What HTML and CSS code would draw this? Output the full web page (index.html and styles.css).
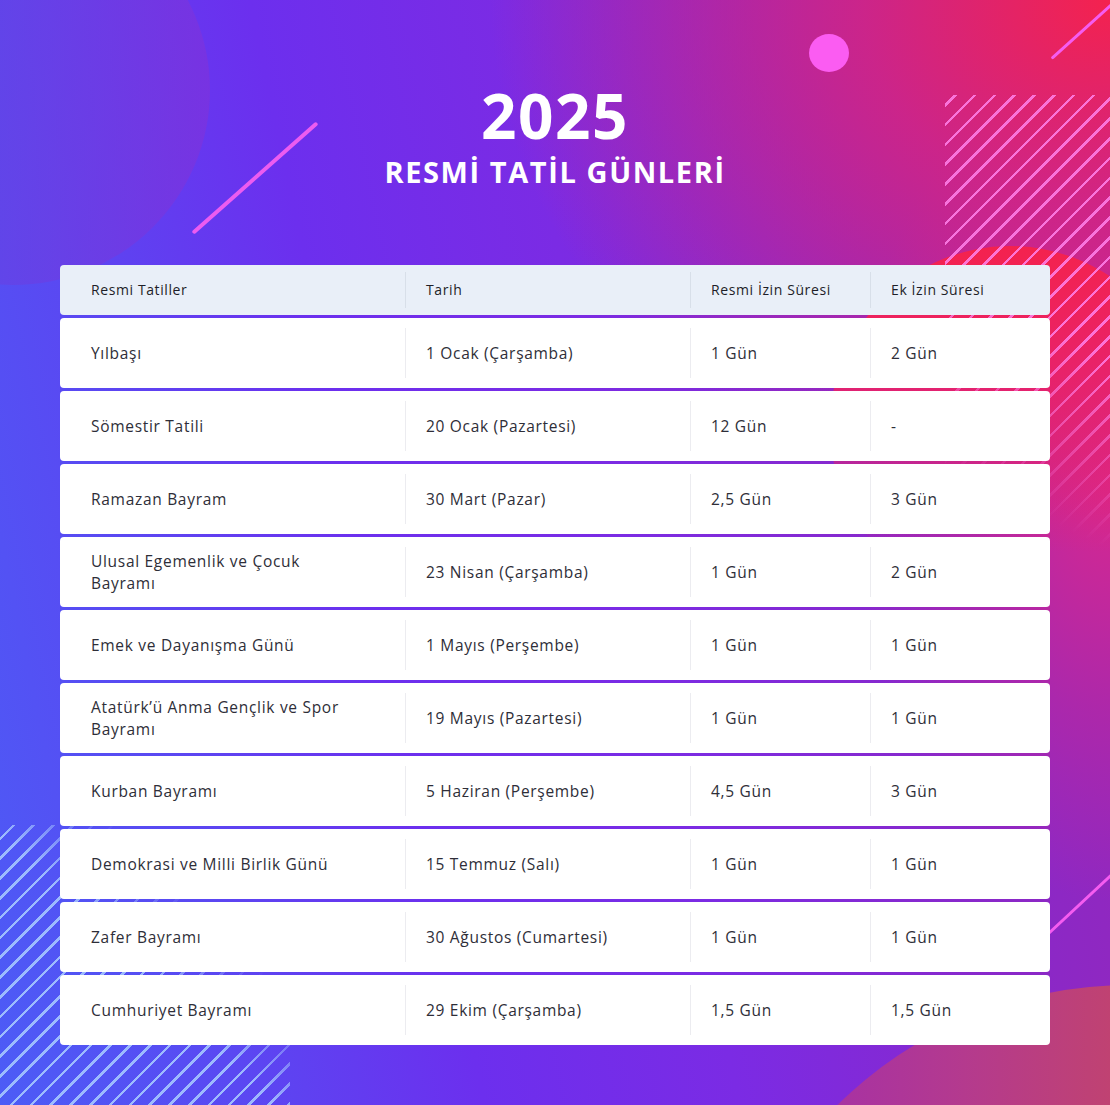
FILE: index.html
```html
<!DOCTYPE html>
<html lang="tr">
<head>
<meta charset="utf-8">
<title>2025 Resmi Tatil Günleri</title>
<link rel="stylesheet" href="styles.css">
</head>
<body>
<div class="page">
  <div class="deco blob-tl"></div>
  <div class="deco blob-red"></div>
  <div class="deco blob-br"></div>
  <div class="deco stripes-tr"></div>
  <div class="deco stripes-bl"></div>
  <div class="deco dot"></div>
  <div class="deco line-a"></div>
  <div class="deco line-b"></div>
  <div class="deco line-c"></div>

  <header class="title">
    <h1 class="year">2025</h1>
    <h2 class="subtitle">RESMİ TATİL GÜNLERİ</h2>
  </header>

  <div class="table">
    <div class="row head">
      <div class="cell c1">Resmi Tatiller</div>
      <div class="cell">Tarih</div>
      <div class="cell">Resmi İzin Süresi</div>
      <div class="cell">Ek İzin Süresi</div>
    </div>
    <div class="row">
      <div class="cell c1">Yılbaşı</div>
      <div class="cell">1 Ocak (Çarşamba)</div>
      <div class="cell">1 Gün</div>
      <div class="cell">2 Gün</div>
    </div>
    <div class="row">
      <div class="cell c1">Sömestir Tatili</div>
      <div class="cell">20 Ocak (Pazartesi)</div>
      <div class="cell">12 Gün</div>
      <div class="cell">-</div>
    </div>
    <div class="row">
      <div class="cell c1">Ramazan Bayram</div>
      <div class="cell">30 Mart (Pazar)</div>
      <div class="cell">2,5 Gün</div>
      <div class="cell">3 Gün</div>
    </div>
    <div class="row">
      <div class="cell c1">Ulusal Egemenlik ve Çocuk Bayramı</div>
      <div class="cell">23 Nisan (Çarşamba)</div>
      <div class="cell">1 Gün</div>
      <div class="cell">2 Gün</div>
    </div>
    <div class="row">
      <div class="cell c1">Emek ve Dayanışma Günü</div>
      <div class="cell">1 Mayıs (Perşembe)</div>
      <div class="cell">1 Gün</div>
      <div class="cell">1 Gün</div>
    </div>
    <div class="row">
      <div class="cell c1">Atatürk’ü Anma Gençlik ve Spor Bayramı</div>
      <div class="cell">19 Mayıs (Pazartesi)</div>
      <div class="cell">1 Gün</div>
      <div class="cell">1 Gün</div>
    </div>
    <div class="row">
      <div class="cell c1">Kurban Bayramı</div>
      <div class="cell">5 Haziran (Perşembe)</div>
      <div class="cell">4,5 Gün</div>
      <div class="cell">3 Gün</div>
    </div>
    <div class="row">
      <div class="cell c1">Demokrasi ve Milli Birlik Günü</div>
      <div class="cell">15 Temmuz (Salı)</div>
      <div class="cell">1 Gün</div>
      <div class="cell">1 Gün</div>
    </div>
    <div class="row">
      <div class="cell c1">Zafer Bayramı</div>
      <div class="cell">30 Ağustos (Cumartesi)</div>
      <div class="cell">1 Gün</div>
      <div class="cell">1 Gün</div>
    </div>
    <div class="row">
      <div class="cell c1">Cumhuriyet Bayramı</div>
      <div class="cell">29 Ekim (Çarşamba)</div>
      <div class="cell">1,5 Gün</div>
      <div class="cell">1,5 Gün</div>
    </div>
  </div>
</div>
</body>
</html>
```

FILE: styles.css
```css
* { box-sizing: border-box; }
html, body { margin: 0; padding: 0; }
body { font-family: "Open Sans", "DejaVu Sans", sans-serif; }

.page {
  position: relative;
  width: 1110px;
  height: 1105px;
  overflow: hidden;
  padding: 0 60px;
  background:
    radial-gradient(ellipse 620px 520px at 1110px 0px, #f4224e 0%, rgba(214,36,128,0.85) 40%, rgba(170,40,180,0) 100%),
    radial-gradient(ellipse 260px 420px at 1110px 480px, rgba(220,40,140,0.95) 0%, rgba(200,40,150,0.5) 55%, rgba(160,40,176,0) 100%),
    linear-gradient(78deg, #4c5cf6 0%, #5a48f2 18%, #6c2fee 36%, #7b2be4 55%, #8a28c8 78%, #9a28b2 100%);
}

.deco { position: absolute; pointer-events: none; }

.blob-tl {
  left: -185px; top: -105px;
  width: 395px; height: 390px;
  border-radius: 50%;
  background: linear-gradient(90deg, #6244e6 40%, #7e32dc 100%);
  opacity: 0.7;
}
.blob-red {
  left: 830px; top: 246px;
  width: 360px; height: 360px;
  border-radius: 50%;
  background: linear-gradient(180deg, #f4224e 0%, #e8226a 35%, rgba(216,36,140,0) 85%);
}
.blob-br {
  left: 713px; top: 985px;
  width: 834px; height: 834px;
  border-radius: 50%;
  background: linear-gradient(90deg, #9c2ab6 0%, #b43a8e 30%, #c8485e 60%, #d04a5a 100%);
}
.stripes-tr {
  left: 945px; top: 95px;
  width: 165px; height: 540px;
  background: repeating-linear-gradient(-45deg, rgba(255,130,235,0.85) 0 2.5px, transparent 2.5px 14px);
  -webkit-mask-image: linear-gradient(205deg, #000 42%, transparent 74%);
  mask-image: linear-gradient(205deg, #000 42%, transparent 74%);
}
.stripes-bl {
  left: 0; top: 825px;
  width: 290px; height: 280px;
  background: repeating-linear-gradient(-45deg, rgba(170,205,255,0.85) 0 2.5px, transparent 2.5px 14px);
  -webkit-mask-image: linear-gradient(45deg, #000 48%, transparent 70%);
  mask-image: linear-gradient(45deg, #000 48%, transparent 70%);
}
.dot {
  left: 809px; top: 34px;
  width: 40px; height: 38px;
  border-radius: 50%;
  background: #fb5cf2;
}
.line-a {
  left: 172px; top: 176px;
  width: 166px; height: 4px;
  border-radius: 2px;
  background: #ec5cf0;
  transform: rotate(-41.5deg);
}
.line-b {
  left: 1030px; top: 898px;
  width: 110px; height: 3px;
  border-radius: 2px;
  background: #f55cf0;
  transform: rotate(-43deg);
}
.line-c {
  left: 1040px; top: 27px;
  width: 90px; height: 3px;
  border-radius: 2px;
  background: #f55cf0;
  transform: rotate(-42deg);
}

.title {
  position: relative;
  text-align: center;
  color: #fff;
  padding-top: 80px;
  height: 265px;
}
.year {
  margin: 0;
  font-size: 62px;
  line-height: 70px;
  font-weight: 700;
  letter-spacing: 1.5px;
}
.subtitle {
  margin: 0;
  margin-top: 2px;
  font-size: 29px;
  line-height: 40px;
  font-weight: 700;
  letter-spacing: 1.6px;
}

.table {
  position: relative;
  display: flex;
  flex-direction: column;
  gap: 3px;
  width: 990px;
}
.row {
  display: grid;
  grid-template-columns: 345px 285px 180px 180px;
  height: 70px;
  background: #fff;
  border-radius: 4px;
  color: #2e2e38;
  font-size: 15.5px;
  letter-spacing: 0.7px;
}
.row.head {
  height: 50px;
  background: #e9eff8;
  font-size: 14px;
  letter-spacing: 0.6px;
  color: #1e1e28;
}
.cell {
  display: flex;
  align-items: center;
  padding-left: 21px;
  padding-right: 12px;
  line-height: 22px;
  position: relative;
}
.cell.c1 { padding-left: 31px; padding-right: 48px; }
.cell + .cell::before {
  content: "";
  position: absolute;
  left: 0; top: 10px; bottom: 10px;
  width: 1px;
  background: #ececf0;
}
.row.head .cell + .cell::before { top: 7px; bottom: 7px; background: #d8dfe9; }
```
